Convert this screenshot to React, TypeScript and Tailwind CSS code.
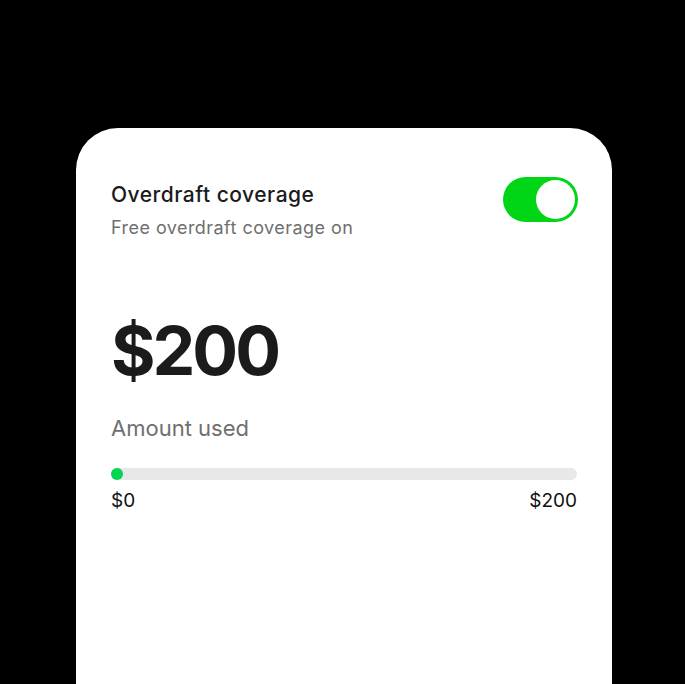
export default function App() {
  return (
    <div className="h-[684px] w-[685px] overflow-hidden bg-black pt-[128px] pl-[76px] font-['Inter',sans-serif]">
      <div className="h-[600px] w-[536px] rounded-t-[42px] bg-white px-[35px] pt-[53px]">
        <div className="flex items-start justify-between">
          <div>
            <div className="text-[21px] leading-[28px] font-medium tracking-[0.5px] text-[#1b1b1b]">Overdraft coverage</div>
            <div className="mt-[7px] text-[18px] leading-[24px] tracking-[0.45px] text-[#6f6f6f]">Free overdraft coverage on</div>
          </div>
          <div className="mt-[-4px] mr-[-1px] flex h-[45px] w-[75px] items-center justify-end rounded-full bg-[#00d615] p-[3px]">
            <div className="h-[39px] w-[39px] rounded-full bg-white" />
          </div>
        </div>
        <div className="mt-[70px] text-[68px] leading-[80px] font-bold tracking-[-3px] text-[#1b1b1b]">$200</div>
        <div className="mt-[24px] text-[22px] leading-[28px] text-[#6f6f6f]">Amount used</div>
        <div className="mt-[26px] relative h-[12px] w-full rounded-full bg-[#e8e8e8]">
          <div className="absolute left-0 top-0 h-[12px] w-[12px] rounded-full bg-[#00d64f]" />
        </div>
        <div className="mt-[8px] flex justify-between text-[19px] leading-[26px] text-[#111]">
          <span>$0</span>
          <span>$200</span>
        </div>
      </div>
    </div>
  );
}
